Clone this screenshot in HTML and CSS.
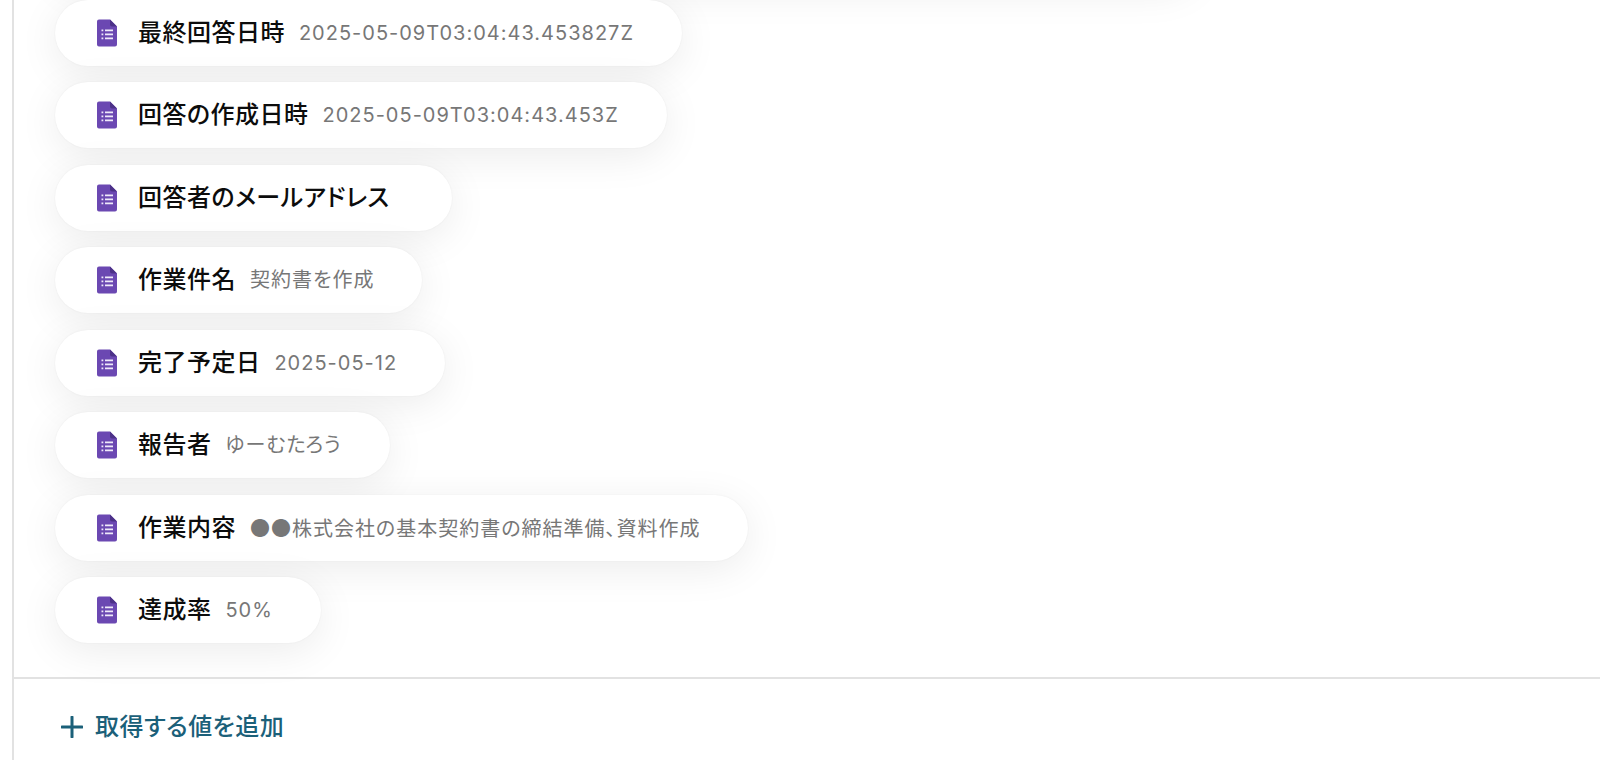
FILE: index.html
```html
<!DOCTYPE html>
<html lang="ja">
<head>
<meta charset="utf-8">
<title>取得する値</title>
<link rel="stylesheet" href="styles.css">
</head>
<body>
<svg class="sprite" aria-hidden="true">
  <symbol id="form" viewBox="0 0 20 28">
    <path fill="#6b48b2" d="M2 .5h11l7 7v18a2 2 0 0 1-2 2H2a2 2 0 0 1-2-2v-23a2 2 0 0 1 2-2z"/>
    <path fill="#4c3188" d="M13 .5l7 7h-5a2 2 0 0 1-2-2z"/>
    <path fill="#efe9fa" d="M4.500 10.500h1.800v1.700h-1.800zM8 10.500h8v1.700H8zM4.500 14.500h1.800v1.700h-1.800zM8 14.500h8v1.700H8zM4.500 18.500h1.800v1.700h-1.800zM8 18.500h8v1.700H8z"/>
  </symbol>
</svg>
<main class="panel">
  <ul class="values">
    <li class="pill pill-wide" aria-hidden="true"></li>
    <li class="pill"><svg class="icon"><use href="#form"/></svg><span class="label">最終回答日時</span><span class="value">2025-05-09T03:04:43.453827Z</span></li>
    <li class="pill"><svg class="icon"><use href="#form"/></svg><span class="label">回答の作成日時</span><span class="value">2025-05-09T03:04:43.453Z</span></li>
    <li class="pill"><svg class="icon"><use href="#form"/></svg><span class="label">回答者のメールアドレス</span><span class="value"></span></li>
    <li class="pill"><svg class="icon"><use href="#form"/></svg><span class="label">作業件名</span><span class="value">契約書を作成</span></li>
    <li class="pill"><svg class="icon"><use href="#form"/></svg><span class="label">完了予定日</span><span class="value">2025-05-12</span></li>
    <li class="pill"><svg class="icon"><use href="#form"/></svg><span class="label">報告者</span><span class="value">ゆーむたろう</span></li>
    <li class="pill"><svg class="icon"><use href="#form"/></svg><span class="label">作業内容</span><span class="value"><span class="cjk">●●</span>株式会社の基本契約書の締結準備、資料作成</span></li>
    <li class="pill"><svg class="icon"><use href="#form"/></svg><span class="label">達成率</span><span class="value">50%</span></li>
  </ul>
  <footer class="footer">
    <button class="add" type="button"><svg class="plus" viewBox="0 0 22 22" aria-hidden="true"><path d="M11 1v20M1 11h20"/></svg>取得する値を追加</button>
  </footer>
</main>
</body>
</html>
```
FILE: styles.css
```css
* { box-sizing: border-box; }
body {
  margin: 0;
  background: #fff;
  font-family: Inter, "Noto Sans CJK JP", sans-serif;
  font-feature-settings: "palt";
  overflow: hidden;
}
.sprite { position: absolute; width: 0; height: 0; }
.panel {
  min-height: 100vh;
  margin-left: 12px;
  border-left: 2px solid #e2e2e2;
  overflow: hidden;
}
.values {
  display: flex;
  flex-direction: column;
  align-items: flex-start;
  list-style: none;
  margin: -83px 0 0;
  padding: 0 41px 34px;
}
.pill {
  display: flex;
  align-items: center;
  height: 66px;
  margin-bottom: 16px;
  padding: 0 48px 0 42px;
  border-radius: 33px;
  background: #fff;
  box-shadow: 0 8px 40px rgba(0, 0, 0, 0.08), 0 0 2px rgba(0, 0, 0, 0.06);
  line-height: 32px;
  white-space: nowrap;
}
.pill:nth-child(odd) { margin-bottom: 17px; }
.pill:last-child { margin-bottom: 0; }
.pill-wide { width: 76%; }
.icon { width: 20px; height: 28px; margin-right: 21px; }
.label {
  margin-right: 14px;
  color: #0c0c0c;
  font-size: 24px;
  font-weight: 500;
  letter-spacing: 0.02em;
}
.value {
  color: #777;
  font-size: 20px;
  font-weight: 400;
  letter-spacing: 1px;
}
.cjk { font-family: "Noto Sans CJK JP", sans-serif; }
.footer {
  padding: 28px 47px;
  border-top: 2px solid #e2e2e2;
}
.add {
  display: flex;
  align-items: center;
  gap: 12px;
  padding: 0;
  border: 0;
  background: none;
  color: #1b6079;
  font: inherit;
  font-size: 24px;
  font-weight: 500;
  font-feature-settings: inherit;
  letter-spacing: 0.02em;
  line-height: 40px;
}
.plus { width: 22px; height: 22px; fill: none; stroke: currentColor; stroke-width: 3; stroke-linecap: round; }
```
